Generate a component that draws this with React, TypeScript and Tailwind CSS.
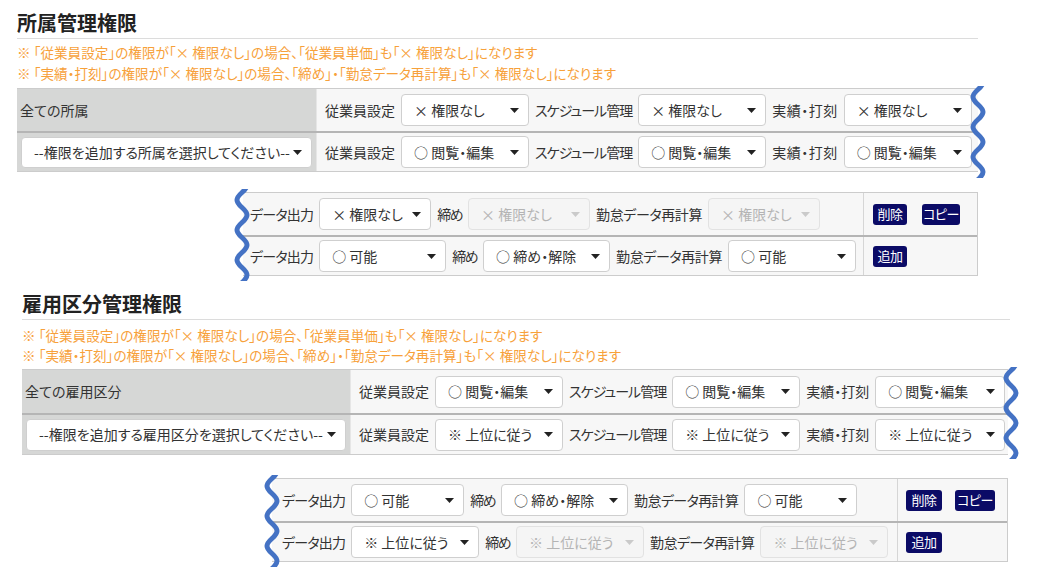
import React from 'react';
import clsx from 'clsx';

// blue "cut" mark drawn over the table edge
const Zig = ({ className }: { className: string }) => (
  <svg className={clsx('absolute', className)} width="18" height="92" viewBox="0 0 18 92" fill="none">
    <path
      d="M14 -4 C14 2, 4 5, 4 11 C4 17, 14 20, 14 26 C14 32, 4 35, 4 41 C4 47, 14 50, 14 56 C14 62, 4 65, 4 71 C4 77, 14 80, 14 86 C14 92, 4 95, 4 101"
      stroke="#4472c4"
      strokeWidth="5"
      strokeLinecap="round"
    />
  </svg>
);

const Caret = ({ disabled }: { disabled?: boolean }) => (
  <svg width="9" height="5" viewBox="0 0 9 5" className="shrink-0">
    <path d="M0 0h9L4.5 5z" fill={disabled ? '#cacaca' : '#222'} />
  </svg>
);

type SelProps = { value: string; w: string; disabled?: boolean; h?: string };

const Select = ({ value, w, disabled, h = 'h-[32px]' }: SelProps) => (
  <div
    className={clsx(
      'flex shrink-0 items-center justify-between rounded-[4px] border pl-[12px] pr-[9px] text-[14px] whitespace-nowrap',
      w,
      h,
      disabled ? 'border-[#e2e2e2] bg-[#f5f5f5] text-[#b4b4b4]' : 'border-[#cfcfcf] bg-white text-[#333]'
    )}
  >
    <span>{value}</span>
    <Caret disabled={disabled} />
  </div>
);

const Label = ({ children, className }: { children: React.ReactNode; className?: string }) => (
  <span className={clsx('shrink-0 whitespace-nowrap text-[14px] text-[#333]', className)}>{children}</span>
);

const Btn = ({ children, w }: { children: React.ReactNode; w: string }) => (
  <span
    className={clsx(
      'flex h-[21px] shrink-0 items-center justify-center whitespace-nowrap rounded-[3px] bg-[#0b0b66] text-[13px] tracking-[-0.5px] text-white',
      w
    )}
  >
    {children}
  </span>
);

const Notes = ({ lh }: { lh: string }) => (
  <div className={clsx('text-[13.6px] text-[#f7a13a]', lh)}>
    <p>※ 「従業員設定」の権限が「× 権限なし」の場合、「従業員単価」も「× 権限なし」になります</p>
    <p>※ 「実績・打刻」の権限が「× 権限なし」の場合、「締め」・「勤怠データ再計算」も「× 権限なし」になります</p>
  </div>
);

export default function App() {
  return (
    <div className="min-h-screen w-[1057px] overflow-hidden bg-white text-[#333] [font-family:'Noto_Sans_CJK_JP','Noto_Sans',sans-serif] [font-feature-settings:'palt']">
      {/* 所属管理権限 */}
      <section className="ml-[17px] w-[961px] pt-[9px]">
        <h2 className="border-b border-[#dcdcdc] pb-[1px] text-[20px] font-bold leading-[28px] text-[#222]">所属管理権限</h2>
        <div className="mt-[3px]">
          <Notes lh="leading-[21px]" />
        </div>

        <div className="relative mt-[4px] border-y border-[#cccccc]">
          <div className="flex h-[42px]">
            <div className="flex w-[299px] items-center bg-[#d6d7d6] pl-[3px] text-[14px]">全ての所属</div>
            <div className="flex flex-1 items-center gap-[6px] border-l border-[#e6e6e6] bg-[#f7f7f7] pl-[8px]">
              <Label>従業員設定</Label>
              <Select value="× 権限なし" w="w-[128px]" />
              <Label className="tracking-[-1px]">スケジュール管理</Label>
              <Select value="× 権限なし" w="w-[128px]" />
              <Label className="tracking-[0.5px]">実績・打刻</Label>
              <Select value="× 権限なし" w="w-[128px]" />
            </div>
          </div>
          <div className="flex h-[40px] border-t-2 border-[#b5b5b5]">
            <div className="flex w-[299px] items-center bg-[#d6d7d6] pl-[4px]">
              <Select value="--権限を追加する所属を選択してください--" w="w-[291px]" h="h-[31px]" />
            </div>
            <div className="flex flex-1 items-center gap-[6px] border-l border-[#e6e6e6] bg-[#f7f7f7] pl-[8px]">
              <Label>従業員設定</Label>
              <Select value="○ 閲覧・編集" w="w-[128px]" />
              <Label className="tracking-[-1px]">スケジュール管理</Label>
              <Select value="○ 閲覧・編集" w="w-[128px]" />
              <Label className="tracking-[0.5px]">実績・打刻</Label>
              <Select value="○ 閲覧・編集" w="w-[128px]" />
            </div>
          </div>
          <Zig className="-right-[9px] -top-[3px]" />
        </div>

        <div className="relative ml-[226px] mt-[20px] border border-l-0 border-[#cccccc]">
          <div className="flex h-[42px] bg-[#f7f7f7]">
            <div className="flex w-[620px] items-center gap-[6px] pl-[7px]">
              <Label className="tracking-[-0.8px]">データ出力</Label>
              <Select value="× 権限なし" w="w-[112px]" />
              <Label className="tracking-[-1.5px]">締め</Label>
              <Select value="× 権限なし" w="w-[122px]" disabled />
              <Label className="tracking-[-0.4px]">勤怠データ再計算</Label>
              <Select value="× 権限なし" w="w-[112px]" disabled />
            </div>
            <div className="flex flex-1 items-center gap-[15px] border-l border-[#d6d6d6] pl-[9px]">
              <Btn w="w-[34px]">削除</Btn>
              <Btn w="w-[38px]">コピー</Btn>
            </div>
          </div>
          <div className="flex h-[40px] border-t-2 border-[#b5b5b5] bg-[#f7f7f7]">
            <div className="flex w-[620px] items-center gap-[6px] pl-[7px]">
              <Label className="tracking-[-0.8px]">データ出力</Label>
              <Select value="○ 可能" w="w-[127px]" />
              <Label className="tracking-[-1.5px]">締め</Label>
              <Select value="○ 締め・解除" w="w-[127px]" />
              <Label className="tracking-[-0.4px]">勤怠データ再計算</Label>
              <Select value="○ 可能" w="w-[128px]" />
            </div>
            <div className="flex flex-1 items-center border-l border-[#d6d6d6] pl-[9px]">
              <Btn w="w-[34px]">追加</Btn>
            </div>
          </div>
          <Zig className="-left-[10px] -top-[4px]" />
        </div>
      </section>

      {/* 雇用区分管理権限 */}
      <section className="ml-[22px] mt-[14px] w-[988px]">
        <h2 className="border-b border-[#dcdcdc] pb-[1px] text-[20px] font-bold leading-[28px] text-[#222]">雇用区分管理権限</h2>
        <div className="mt-[5px]">
          <Notes lh="leading-[20px]" />
        </div>

        <div className="relative mt-[4px] w-[986px] border-y border-[#cccccc]">
          <div className="flex h-[43px]">
            <div className="flex w-[328px] items-center bg-[#d6d7d6] pl-[3px] text-[14px]">全ての雇用区分</div>
            <div className="flex flex-1 items-center gap-[6px] border-l border-[#e6e6e6] bg-[#f7f7f7] pl-[8px]">
              <Label>従業員設定</Label>
              <Select value="○ 閲覧・編集" w="w-[128px]" />
              <Label className="tracking-[-1px]">スケジュール管理</Label>
              <Select value="○ 閲覧・編集" w="w-[128px]" />
              <Label>実績・打刻</Label>
              <Select value="○ 閲覧・編集" w="w-[130px]" />
            </div>
          </div>
          <div className="flex h-[41px] border-t-2 border-[#b5b5b5]">
            <div className="flex w-[328px] items-center bg-[#d6d7d6] pl-[4px]">
              <Select value="--権限を追加する雇用区分を選択してください--" w="w-[320px]" h="h-[32px]" />
            </div>
            <div className="flex flex-1 items-center gap-[6px] border-l border-[#e6e6e6] bg-[#f7f7f7] pl-[8px]">
              <Label>従業員設定</Label>
              <Select value="※ 上位に従う" w="w-[128px]" />
              <Label className="tracking-[-1px]">スケジュール管理</Label>
              <Select value="※ 上位に従う" w="w-[128px]" />
              <Label>実績・打刻</Label>
              <Select value="※ 上位に従う" w="w-[130px]" />
            </div>
          </div>
          <Zig className="-right-[12px] -top-[3px]" />
        </div>

        <div className="relative ml-[250px] mt-[23px] w-[736px] border border-l-0 border-[#cccccc]">
          <div className="flex h-[42px] bg-[#f7f7f7]">
            <div className="flex w-[625px] items-center gap-[6px] pl-[10px]">
              <Label className="tracking-[-0.8px]">データ出力</Label>
              <Select value="○ 可能" w="w-[113px]" />
              <Label className="tracking-[-1.5px]">締め</Label>
              <Select value="○ 締め・解除" w="w-[127px]" />
              <Label className="tracking-[-0.6px]">勤怠データ再計算</Label>
              <Select value="○ 可能" w="w-[113px]" />
            </div>
            <div className="flex flex-1 items-center gap-[13px] border-l border-[#d6d6d6] pl-[8px]">
              <Btn w="w-[36px]">削除</Btn>
              <Btn w="w-[40px]">コピー</Btn>
            </div>
          </div>
          <div className="flex h-[40px] border-t-2 border-[#b5b5b5] bg-[#f7f7f7]">
            <div className="flex w-[625px] items-center gap-[6px] pl-[10px]">
              <Label className="tracking-[-0.8px]">データ出力</Label>
              <Select value="※ 上位に従う" w="w-[128px]" />
              <Label className="tracking-[-1.5px]">締め</Label>
              <Select value="※ 上位に従う" w="w-[128px]" disabled />
              <Label className="tracking-[-0.6px]">勤怠データ再計算</Label>
              <Select value="※ 上位に従う" w="w-[128px]" disabled />
            </div>
            <div className="flex flex-1 items-center border-l border-[#d6d6d6] pl-[8px]">
              <Btn w="w-[36px]">追加</Btn>
            </div>
          </div>
          <Zig className="-left-[9px] -top-[4px]" />
        </div>
      </section>
    </div>
  );
}
